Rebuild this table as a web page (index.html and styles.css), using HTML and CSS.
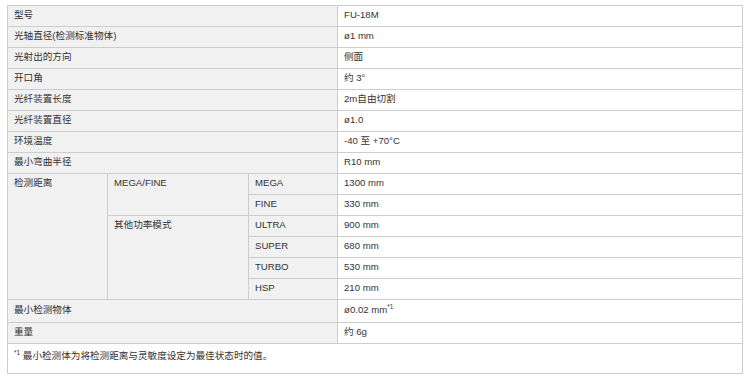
FILE: index.html
```html
<!DOCTYPE html>
<html lang="zh">
<head>
<meta charset="utf-8">
<link rel="stylesheet" href="styles.css">
</head>
<body>
<div class="wrap">
<table class="spec">
  <colgroup>
    <col class="c1"><col class="c2"><col class="c3"><col class="c4">
  </colgroup>
  <tbody>
    <tr><th colspan="3">型号</th><td>FU-18M</td></tr>
    <tr><th colspan="3">光轴直径(检测标准物体)</th><td>ø1 mm</td></tr>
    <tr><th colspan="3">光射出的方向</th><td>侧面</td></tr>
    <tr><th colspan="3">开口角</th><td>约 3°</td></tr>
    <tr><th colspan="3">光纤装置长度</th><td>2m自由切割</td></tr>
    <tr><th colspan="3">光纤装置直径</th><td>ø1.0</td></tr>
    <tr><th colspan="3">环境温度</th><td>-40 至 +70°C</td></tr>
    <tr><th colspan="3">最小弯曲半径</th><td>R10 mm</td></tr>
    <tr><th rowspan="6">检测距离</th><th rowspan="2">MEGA/FINE</th><th>MEGA</th><td>1300 mm</td></tr>
    <tr><th>FINE</th><td>330 mm</td></tr>
    <tr><th rowspan="4">其他功率模式</th><th>ULTRA</th><td>900 mm</td></tr>
    <tr><th>SUPER</th><td>680 mm</td></tr>
    <tr><th>TURBO</th><td>530 mm</td></tr>
    <tr><th>HSP</th><td>210 mm</td></tr>
    <tr class="tall"><th colspan="3">最小检测物体</th><td>ø0.02 mm<sup>*1</sup></td></tr>
    <tr><th colspan="3">重量</th><td>约 6g</td></tr>
    <tr class="note"><td colspan="4"><sup>*1</sup> 最小检测体为将检测距离与灵敏度设定为最佳状态时的值。</td></tr>
  </tbody>
</table>
</div>
</body>
</html>
```

FILE: styles.css
```css
html, body {
  margin: 0;
  padding: 0;
  background: #ffffff;
}
.wrap {
  padding: 5px 0 0 7px;
}
.spec {
  border-collapse: collapse;
  width: 735px;
  table-layout: fixed;
  font-family: "Liberation Sans", Arial, "Noto Sans CJK SC", sans-serif;
  font-size: 9.6px;
  line-height: 12px;
  color: #333333;
}
.c1 { width: 100px; }
.c2 { width: 141px; }
.c3 { width: 89px; }
.c4 { width: 405px; }
.spec th, .spec td {
  border: 1px solid #cdcdcd;
  height: 21px;
  box-sizing: border-box;
  padding: 3px 5px 4px 6px;
  vertical-align: top;
  text-align: left;
  font-weight: normal;
}
.spec th {
  background: #f1f1f1;
}
.spec td {
  background: #ffffff;
}
.spec tr.tall th, .spec tr.tall td {
  height: 23px;
  padding-top: 4px;
}
.spec sup {
  font-size: 6.5px;
  line-height: 0;
  vertical-align: 4px;
}
.spec tr.note td {
  height: 30px;
  padding-top: 6px;
}
```
